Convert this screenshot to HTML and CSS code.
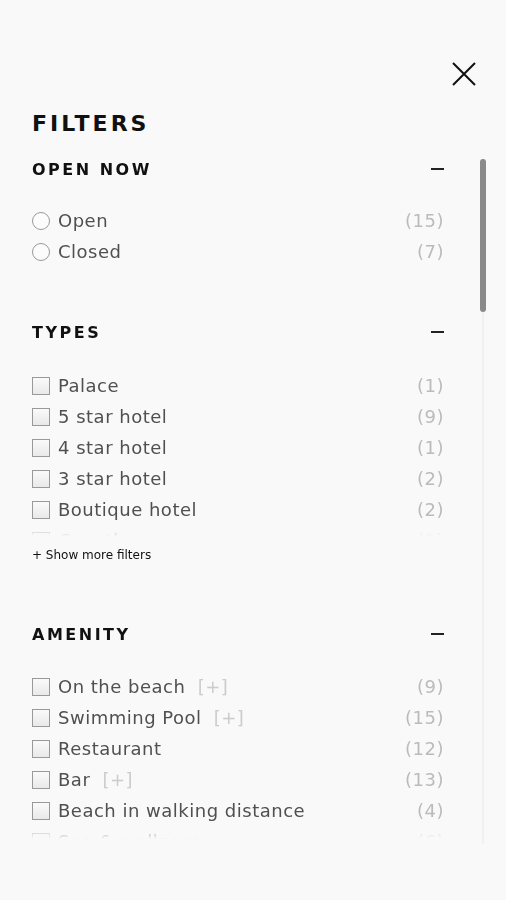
FILE: index.html
```html
<!DOCTYPE html>
<html lang="en">
<head>
  <meta charset="UTF-8">
  <title>Filters</title>
  <meta name="viewport" content="width=device-width, initial-scale=1.0">
  <link rel="stylesheet" href="styles.css">
</head>
<body>
  <div class="panel">
    <div class="top-bar">
      <button class="close-btn" aria-label="Close">
        <svg width="24" height="24" viewBox="0 0 24 24"><path d="M1 1 L23 23 M23 1 L1 23" stroke="#111" stroke-width="2" fill="none"/></svg>
      </button>
    </div>
    <h1 class="title">FILTERS</h1>

    <div class="scroll-area">
      <div class="scroll-content">
        <section class="filter-group">
          <div class="group-header">
            <h2>OPEN NOW</h2>
            <span class="collapse"></span>
          </div>
          <ul class="options">
            <li><span class="radio"></span><span class="label">Open</span><span class="count">(15)</span></li>
            <li><span class="radio"></span><span class="label">Closed</span><span class="count">(7)</span></li>
          </ul>
        </section>

        <section class="filter-group types">
          <div class="group-header">
            <h2>TYPES</h2>
            <span class="collapse"></span>
          </div>
          <ul class="options clipped">
            <li><span class="check"></span><span class="label">Palace</span><span class="count">(1)</span></li>
            <li><span class="check"></span><span class="label">5 star hotel</span><span class="count">(9)</span></li>
            <li><span class="check"></span><span class="label">4 star hotel</span><span class="count">(1)</span></li>
            <li><span class="check"></span><span class="label">3 star hotel</span><span class="count">(2)</span></li>
            <li><span class="check"></span><span class="label">Boutique hotel</span><span class="count">(2)</span></li>
            <li><span class="check"></span><span class="label">Guesthouse</span><span class="count">(1)</span></li>
          </ul>
          <a class="show-more" href="#">+ Show more filters</a>
        </section>

        <section class="filter-group amenity">
          <div class="group-header">
            <h2>AMENITY</h2>
            <span class="collapse"></span>
          </div>
          <ul class="options">
            <li><span class="check"></span><span class="label">On the beach <span class="more">[+]</span></span><span class="count">(9)</span></li>
            <li><span class="check"></span><span class="label">Swimming Pool <span class="more">[+]</span></span><span class="count">(15)</span></li>
            <li><span class="check"></span><span class="label">Restaurant</span><span class="count">(12)</span></li>
            <li><span class="check"></span><span class="label">Bar <span class="more">[+]</span></span><span class="count">(13)</span></li>
            <li><span class="check"></span><span class="label">Beach in walking distance</span><span class="count">(4)</span></li>
            <li><span class="check"></span><span class="label">Spa &amp; wellness</span><span class="count">(6)</span></li>
          </ul>
        </section>
      </div>

      <div class="scrollbar"><div class="thumb"></div></div>
    </div>
  </div>
</body>
</html>
```

FILE: styles.css
```css
* {
  margin: 0;
  padding: 0;
  box-sizing: border-box;
}

body {
  font-family: 'DejaVu Sans', 'Liberation Sans', sans-serif;
  background-color: #f9f9f9;
  color: #111;
}

.panel {
  padding: 62px 0 0 32px;
}

.top-bar {
  display: flex;
  justify-content: flex-end;
  padding-right: 30px;
  height: 24px;
}

.close-btn {
  background: none;
  border: none;
  width: 24px;
  height: 24px;
  cursor: pointer;
}

.title {
  margin-top: 24px;
  font-size: 22px;
  line-height: 28px;
  font-weight: bold;
  letter-spacing: 3px;
}

.scroll-area {
  position: relative;
  margin-top: 11px;
  height: 695px;
  overflow: hidden;
}

.scroll-content {
  height: 100%;
  overflow: hidden;
  padding: 8px 62px 0 0;
  -webkit-mask-image: linear-gradient(to bottom, #000 672px, transparent 690px);
}

.group-header {
  display: flex;
  justify-content: space-between;
  align-items: center;
  height: 24px;
}

.group-header h2 {
  font-size: 16px;
  font-weight: bold;
  letter-spacing: 2.5px;
}

.collapse {
  width: 13px;
  height: 2px;
  background: #222;
}

.filter-group {
  margin-bottom: 53px;
}

.filter-group.types {
  margin-bottom: 59px;
}

.options {
  list-style: none;
  margin-top: 24px;
}

.amenity .options {
  margin-top: 25px;
}

.options.clipped {
  margin-top: 26px;
  max-height: 166px;
  overflow: hidden;
  -webkit-mask-image: linear-gradient(to bottom, #000 152px, transparent 166px);
}

.options li {
  display: flex;
  align-items: center;
  height: 31px;
  font-size: 18px;
  letter-spacing: 0.5px;
  color: #505050;
}

.radio {
  width: 18px;
  height: 18px;
  border: 1px solid #999;
  border-radius: 50%;
  background: #fcfcfc;
  margin-right: 8px;
}

.check {
  width: 18px;
  height: 18px;
  border: 1px solid #999;
  background: linear-gradient(#fafafa, #e9e9e9);
  margin-right: 8px;
}

.label {
  flex: 1;
}

.more {
  color: #ccc;
  margin-left: 6px;
}

.count {
  color: #bbb;
}

.show-more {
  display: block;
  margin-top: 11px;
  font-size: 12px;
  line-height: 16px;
  color: #111;
  text-decoration: none;
}

.scrollbar {
  position: absolute;
  top: 10px;
  right: 20px;
  width: 6px;
  bottom: 0;
  display: flex;
  justify-content: center;
}

.scrollbar::before {
  content: "";
  position: absolute;
  top: 0;
  bottom: 0;
  width: 2px;
  background: #f1f1f1;
}

.thumb {
  position: relative;
  width: 6px;
  height: 153px;
  border-radius: 3px;
  background: #8a8a8a;
}
```
